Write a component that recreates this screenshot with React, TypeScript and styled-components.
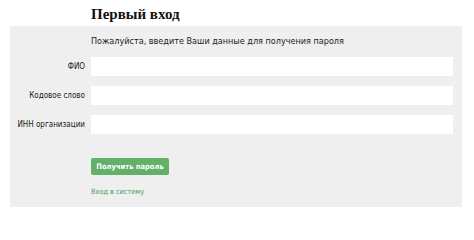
import React from "react";
import styled, { createGlobalStyle } from "styled-components";

const Global = createGlobalStyle`
  html, body { margin: 0; padding: 0; background: #ffffff; }
  body { font-family: "DejaVu Sans Condensed", "DejaVu Sans", Verdana, sans-serif; }
`;

const Page = styled.div`
  width: 474px;
  padding: 0 12px 0 10px;
  box-sizing: border-box;
`;

const Title = styled.h1`
  margin: 0;
  padding: 6px 0 0 81px;
  height: 26px;
  box-sizing: border-box;
  font-family: "Liberation Serif", "Times New Roman", serif;
  font-weight: bold;
  font-size: 15px;
  line-height: 17px;
  color: #111;
`;

const Panel = styled.div`
  background: #efefef;
  padding: 9px 9px 10px 0;
  display: grid;
  grid-template-columns: 75px 1fr;
  column-gap: 6px;
  row-gap: 10px;
  align-items: center;
`;

const Note = styled.div`
  grid-column: 2;
  font-size: 9px;
  line-height: 12px;
  color: #222;
`;

const Label = styled.label`
  grid-column: 1;
  text-align: right;
  font-size: 8px;
  color: #1a1a1a;
  white-space: nowrap;
`;

const Input = styled.input`
  grid-column: 2;
  height: 19px;
  box-sizing: border-box;
  border: none;
  background: #fff;
  outline: none;
  margin: 0;
  padding: 0 4px;
`;

const Actions = styled.div`
  grid-column: 2;
  display: flex;
  flex-direction: column;
  align-items: flex-start;
  gap: 12px;
  padding-top: 14px;
`;

const Button = styled.button`
  background: #63b06a;
  color: #fff;
  border: none;
  border-radius: 2px;
  height: 17px;
  width: 78px;
  padding: 0;
  font-family: "DejaVu Sans Condensed", "DejaVu Sans", Verdana, sans-serif;
  font-weight: bold;
  font-size: 7.5px;
  white-space: nowrap;
  cursor: pointer;
`;

const Link = styled.a`
  color: #4a9a55;
  font-size: 7.3px;
  line-height: 10px;
  text-decoration: none;
`;

export default function App() {
  return (
    <>
      <Global />
      <Page>
        <Title>Первый вход</Title>
        <Panel>
          <Note>Пожалуйста, введите Ваши данные для получения пароля</Note>
          <Label>ФИО</Label>
          <Input />
          <Label>Кодовое слово</Label>
          <Input />
          <Label>ИНН организации</Label>
          <Input />
          <Actions>
            <Button>Получить пароль</Button>
            <Link href="#">Вход в систему</Link>
          </Actions>
        </Panel>
      </Page>
    </>
  );
}
